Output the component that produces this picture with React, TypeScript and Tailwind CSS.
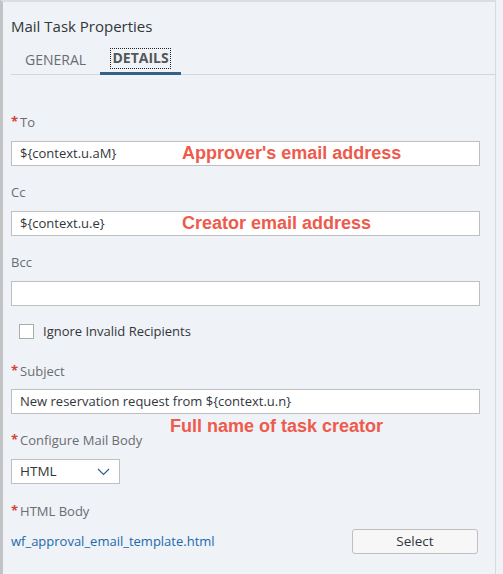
import { ReactNode } from "react";

const font = { fontFamily: '"Open Sans", "Noto Sans", Arial, sans-serif' };

const Label = ({ children, required }: { children: ReactNode; required?: boolean }) => {
  return (
    <div className="flex items-center h-[20px] text-[13px] leading-[20px] text-[#6a6d70]">
      {required && (
        <span className="text-[#d0453a] font-bold mr-[2px] text-[13px] leading-[13px] self-start mt-[3px]">*</span>
      )}
      <span>{children}</span>
    </div>
  );
};

const Input = ({ value }: { value?: string }) => {
  return (
    <div className="w-[469px] h-[25px] bg-white border border-[#bfbfbf] flex items-center pl-[8px] text-[13px] text-[#32363a]">
      {value}
    </div>
  );
};

const Note = ({ children, className }: { children: ReactNode; className: string }) => {
  return (
    <span
      className={"absolute whitespace-nowrap font-bold text-[18px] leading-[20px] text-[#ee5a4c] " + className}
      style={{ fontFamily: '"Liberation Sans", Arial, sans-serif' }}
    >
      {children}
    </span>
  );
};

export default function App() {
  return (
    <div className="flex w-[503px] h-[574px] bg-[#eff2f7] overflow-hidden" style={font}>
      <div className="w-[496px] h-full border-l-[3px] border-l-[#c2c3c4] border-t-2 border-t-[#dcdddf] border-r border-r-[#d9dadc] pl-[8px]">
        <h2 className="mt-[14px] text-[15px] leading-[20px] text-[#32363a]">Mail Task Properties</h2>

        {/* tabs */}
        <div className="flex h-[30px] mt-[9px] border-b border-[#d4d6d9] pl-[14px] text-[14px] uppercase">
          <div className="text-[#6a6d70] pt-[4px]">General</div>
          <div className="ml-[14px] w-[81px] relative flex justify-center pt-[4px]">
            <span className="font-bold text-[#545759] h-[19px] leading-[18px] px-[1px] outline outline-1 outline-dotted outline-[#222]">
              Details
            </span>
            <div className="absolute left-0 right-0 bottom-[-1px] h-[3px] bg-[#346187]" />
          </div>
        </div>

        {/* To */}
        <div className="mt-[37px]">
          <Label required>To</Label>
          <div className="relative mt-[9px]">
            <Input value="${context.u.aM}" />
            <Note className="left-[171px] top-[2px]">Approver's email address</Note>
          </div>
        </div>

        {/* Cc */}
        <div className="mt-[16px]">
          <Label>Cc</Label>
          <div className="relative mt-[9px]">
            <Input value="${context.u.e}" />
            <Note className="left-[171px] top-[2px]">Creator email address</Note>
          </div>
        </div>

        {/* Bcc */}
        <div className="mt-[16px]">
          <Label>Bcc</Label>
          <div className="mt-[9px]">
            <Input />
          </div>
        </div>

        <div className="flex items-center mt-[18px] ml-[8px] h-[15px]">
          <div className="w-[15px] h-[15px] bg-white border border-[#a9abad]" />
          <span className="ml-[9px] text-[13px] text-[#32363a]">Ignore Invalid Recipients</span>
        </div>

        {/* Subject */}
        <div className="mt-[22px]">
          <Label required>Subject</Label>
          <div className="relative mt-[8px]">
            <Input value="New reservation request from ${context.u.n}" />
            <Note className="left-[159px] top-[27px]">Full name of task creator</Note>
          </div>
        </div>

        {/* Configure Mail Body */}
        <div className="mt-[16px]">
          <Label required>Configure Mail Body</Label>
          <div className="mt-[9px] w-[109px] h-[25px] bg-white border border-[#bfbfbf] flex items-center justify-between pl-[8px] pr-[9px] text-[13.5px] text-[#32363a]">
            <span>HTML</span>
            <svg width="13" height="8" viewBox="0 0 13 8" fill="none" stroke="#2f5f8f" strokeWidth="1.2">
              <path d="M1 1l5.5 5.5L12 1" />
            </svg>
          </div>
        </div>

        {/* HTML Body */}
        <div className="mt-[17px]">
          <Label required>HTML Body</Label>
          <div className="mt-[8px] w-[467px] flex items-center justify-between">
            <span className="text-[13px] text-[#1c69ad]">wf_approval_email_template.html</span>
            <button className="w-[126px] h-[25px] bg-[#f7f7f7] border border-[#bfbfbf] rounded-[3px] text-[13.5px] text-[#32363a]">
              Select
            </button>
          </div>
        </div>
      </div>
    </div>
  );
}
